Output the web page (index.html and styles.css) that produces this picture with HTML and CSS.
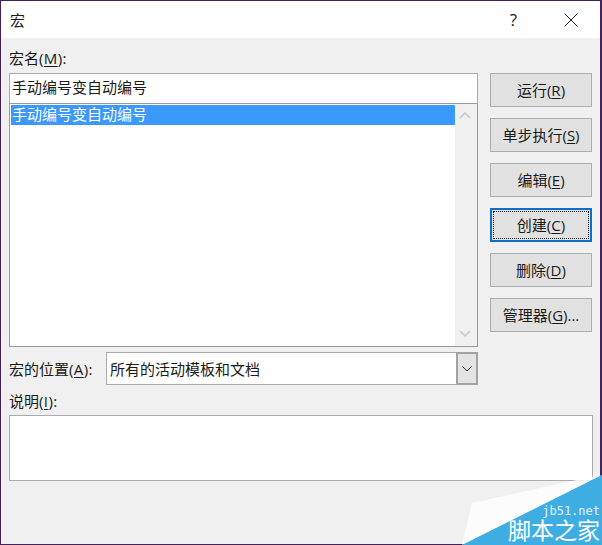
FILE: index.html
```html
<!DOCTYPE html>
<html lang="zh-CN">
<head>
<meta charset="utf-8">
<title>宏</title>
<link rel="stylesheet" href="styles.css">
</head>
<body>
<div class="dialog">
  <header class="titlebar">
    <span class="title">宏</span>
    <span class="help">?</span>
    <svg class="close" width="14" height="14" viewBox="0 0 14 14"><path d="M.5.5l13 13M13.5.5l-13 13" stroke="#222" fill="none"/></svg>
  </header>
  <div class="client">
    <div class="top">
      <div class="left">
        <div class="label name-label">宏名<span class="acc">(<u>M</u>):</span></div>
        <div class="input">手动编号变自动编号</div>
        <div class="list">
          <div class="items"><div class="item">手动编号变自动编号</div></div>
          <div class="scrollbar">
            <svg width="12" height="7" viewBox="0 0 12 7"><path d="M1 6l5-5 5 5" stroke="#c8c8c8" stroke-width="1.500" fill="none"/></svg>
            <svg width="12" height="7" viewBox="0 0 12 7"><path d="M1 1l5 5 5-5" stroke="#c8c8c8" stroke-width="1.500" fill="none"/></svg>
          </div>
        </div>
      </div>
      <div class="buttons">
        <div class="btn">运行(<u>R</u>)</div>
        <div class="btn">单步执行(<u>S</u>)</div>
        <div class="btn">编辑(<u>E</u>)</div>
        <div class="btn default"><span class="focus">创建(<u>C</u>)</span></div>
        <div class="btn">删除(<u>D</u>)</div>
        <div class="btn">管理器(<u>G</u>)...</div>
      </div>
    </div>
    <div class="location">
      <div class="label loc-label">宏的位置<span class="acc">(<u>A</u>):</span></div>
      <div class="select">
        <span class="value">所有的活动模板和文档</span>
        <span class="arrow"><svg width="10" height="6" viewBox="0 0 10 6"><path d="M.5.5L5 5 9.500.5" stroke="#333" fill="none"/></svg></span>
      </div>
    </div>
    <div class="label desc-label">说明<span class="acc">(<u>I</u>):</span></div>
    <div class="desc"></div>
  </div>
  <div class="watermark">
    <svg width="158" height="141" viewBox="0 0 158 141"><path d="M18 141L28 99 133 76 158 71Z" fill="#fff" opacity=".8"/><path d="M18 141L158 71V141Z" fill="#3eaee2"/></svg>
    <span class="wm-url">jb51.net</span>
    <span class="wm-name">脚本之家</span>
  </div>
</div>
</body>
</html>
```
FILE: styles.css
```css
* { box-sizing: border-box; }
html, body { margin: 0; padding: 0; }
body { width: 602px; height: 545px; overflow: hidden; }
u { text-underline-offset: 2px; }
.dialog {
  position: relative;
  width: 602px;
  height: 545px;
  display: flex;
  flex-direction: column;
  border: 1px solid #43215c;
  border-right-width: 2px;
  background: #f0f0f0;
  color: #1a1a1a;
  font: 15px/20px "Open Sans", "Noto Sans CJK SC", sans-serif;
}
.titlebar {
  height: 37px;
  flex: none;
  background: #fff;
  display: flex;
  align-items: center;
  padding-left: 9px;
}
.title { flex: 1; }
.help { margin-right: 47px; font-size: 17px; }
.close { margin-right: 22px; }
.client { flex: 1; padding: 0 7px 0 8px; display: flex; flex-direction: column; }
.top { display: flex; justify-content: space-between; }
.left { width: 469px; }
.label { height: 20px; white-space: nowrap; }
.acc { letter-spacing: .4px; }
.name-label { margin-top: 10px; }
.input {
  margin-top: 5px;
  height: 31px;
  background: #fff;
  border: 1px solid #ababab;
  padding: 3px 2px;
}
.list {
  height: 244px;
  margin-top: -1px;
  background: #fff;
  border: 1px solid #9a9a9a;
  padding: 1px;
  display: flex;
}
.items { flex: 1; }
.item { height: 20px; background: #3b99fc; color: #fff; padding-left: 1px; line-height: 18px; }
.scrollbar {
  width: 22px;
  background: #f0f0f0;
  display: flex;
  flex-direction: column;
  justify-content: space-between;
  align-items: center;
  padding: 8px 2px 9px 0;
  margin: -1px -1px -1px 0;
}
.buttons { width: 102px; margin-top: 35px; margin-right: 1px; display: flex; flex-direction: column; gap: 11px; }
.btn {
  height: 34px;
  background: #e1e1e1;
  border: 1px solid #adadad;
  display: flex;
  align-items: center;
  justify-content: center;
  white-space: nowrap;
}
.btn.default { border: 2px solid #0f6fc6; padding: 1px; }
.focus {
  flex: 1;
  align-self: stretch;
  border: 1px dotted #111;
  display: flex;
  align-items: center;
  justify-content: center;
  white-space: pre;
}
.location { display: flex; align-items: center; margin-top: 5px; width: 469px; }
.loc-label { width: 97px; flex: none; }
.select {
  flex: 1;
  height: 33px;
  background: #fff;
  border: 1px solid #ababab;
  display: flex;
  align-items: center;
  justify-content: space-between;
  padding-left: 3px;
}
.arrow {
  width: 22px;
  height: 33px;
  margin: 0 -1px 0 0;
  background: #e3e3e3;
  border: 2px solid #a2a2a2;
  display: flex;
  align-items: center;
  justify-content: center;
}
.desc-label { margin-top: 6px; }
.desc { margin-top: 4px; height: 66px; width: 584px; background: #fff; border: 1px solid #ababab; }
.watermark { position: absolute; right: -2px; bottom: -1px; width: 158px; height: 141px; }
.watermark svg { display: block; }
.wm-url { position: absolute; right: 2px; top: 102px; color: #e4f4fc; font: 12px/11px "DejaVu Sans Mono", monospace; white-space: nowrap; }
.wm-name { position: absolute; right: 2px; top: 115px; color: #fff; font: 23px/24px "Liberation Sans", "Noto Sans CJK SC", sans-serif; white-space: nowrap; }
```
